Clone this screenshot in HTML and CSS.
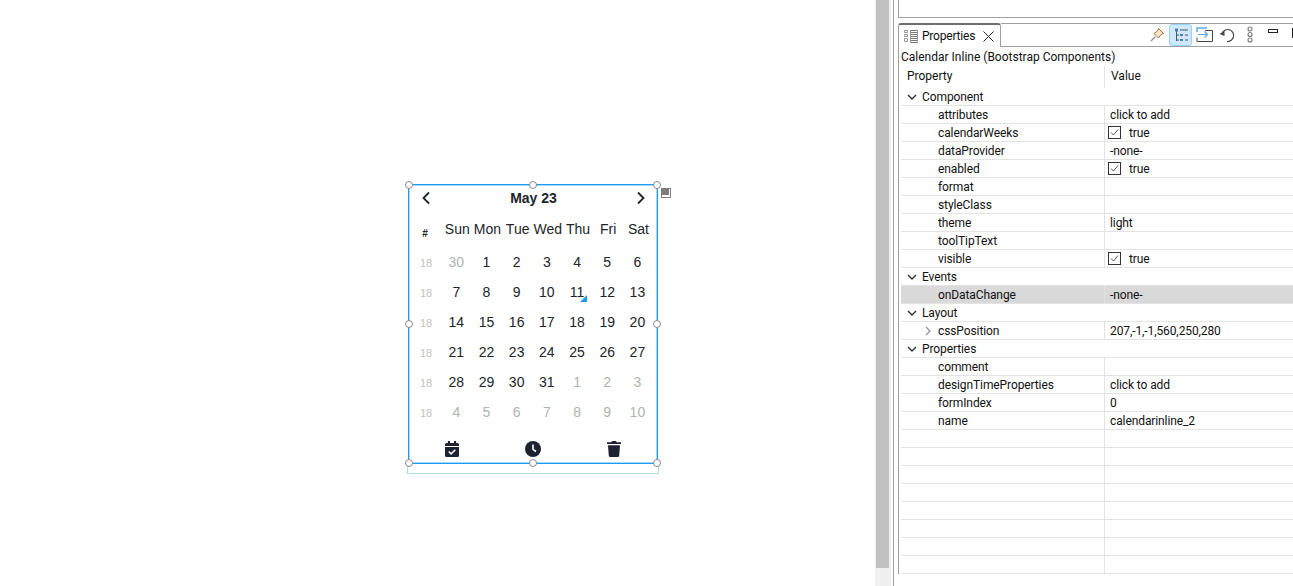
FILE: index.html
```html
<!DOCTYPE html>
<html lang="en">

<head>
    <meta charset="UTF-8">
    <title>Calendar Inline</title>
    <link rel="stylesheet" href="styles.css">
</head>

<body>
    <div class="canvas">
        <div class="ghost"></div>
        <div class="calendar">
            <div class="cal-head">
                <svg class="nav" viewBox="0 0 10 14"><path d="M8 1.500 2.500 7 8 12.500" /></svg>
                <span class="cal-title">May 23</span>
                <svg class="nav" viewBox="0 0 10 14"><path d="M2 1.500 7.500 7 2 12.500" /></svg>
            </div>
            <div class="cal-grid cal-weekdays">
                <span class="hash">#</span>
                <span>Sun</span><span>Mon</span><span>Tue</span><span>Wed</span><span>Thu</span><span>Fri</span><span>Sat</span>
            </div>
            <div class="cal-grid">
                <span class="wk">18</span><span class="muted">30</span><span>1</span><span>2</span><span>3</span><span>4</span><span>5</span><span>6</span>
                <span class="wk">18</span><span>7</span><span>8</span><span>9</span><span>10</span><span class="today">11</span><span>12</span><span>13</span>
                <span class="wk">18</span><span>14</span><span>15</span><span>16</span><span>17</span><span>18</span><span>19</span><span>20</span>
                <span class="wk">18</span><span>21</span><span>22</span><span>23</span><span>24</span><span>25</span><span>26</span><span>27</span>
                <span class="wk">18</span><span>28</span><span>29</span><span>30</span><span>31</span><span class="muted">1</span><span class="muted">2</span><span class="muted">3</span>
                <span class="wk">18</span><span class="muted">4</span><span class="muted">5</span><span class="muted">6</span><span class="muted">7</span><span class="muted">8</span><span class="muted">9</span><span class="muted">10</span>
            </div>
            <div class="cal-foot">
                <svg class="foot-icon" viewBox="0 0 14 16">
                    <path d="M3 0h2v2h4V0h2v2h1.500A1.500 1.500 0 0 1 14 3.500V5H0V3.500A1.500 1.500 0 0 1 1.500 2H3zM0 6h14v8.500a1.500 1.500 0 0 1-1.500 1.500h-11A1.500 1.500 0 0 1 0 14.500z" />
                    <path class="tick" d="M3.800 10.500 6.100 12.800 10.300 8.700" />
                </svg>
                <svg class="foot-icon" viewBox="0 0 16 16">
                    <circle cx="8" cy="8" r="8" />
                    <path class="tick" d="M8 3.500V8.300L11 10.500" />
                </svg>
                <svg class="foot-icon" viewBox="0 0 14 16">
                    <path d="M5 0h4l.7 1.200H14v1.800H0V1.200h4.300zM1 4.200h12l-.8 10.500A1.400 1.400 0 0 1 10.800 16H3.200a1.400 1.400 0 0 1-1.400-1.300z" />
                </svg>
            </div>
        </div>
        <span class="handle h-tl"></span><span class="handle h-tc"></span><span class="handle h-tr"></span>
        <span class="handle h-ml"></span><span class="handle h-mr"></span>
        <span class="handle h-bl"></span><span class="handle h-bc"></span><span class="handle h-br"></span>
        <svg class="corner" viewBox="0 0 10 10">
            <rect x="0" y="0" width="10" height="10" fill="#7d7d7d" />
            <rect x="8" y="1" width="1" height="7" fill="#fff" />
            <rect x="1" y="7" width="8" height="2" fill="#fff" />
        </svg>
    </div>

    <div class="scrollbar"><div class="thumb"></div></div>

    <div class="views">
        <div class="upper-view"></div>
        <div class="tab-bar">
            <div class="tab">
                <svg class="tab-icon" viewBox="0 0 14 14">
                    <path d="M.5 1.500h3v2h-3zM.5 5.500h3v2h-3zM.5 9.500h3v3h-3z" stroke="#9a9a9a" />
                    <path d="M6 1.500h8M6 3.500h8M6 5.500h8M6 7.500h8M6 9.500h8M6 11.500h8M6 13.500h8" stroke="#777" />
                    <path d="M6.500 1v13M13.500 1v13" stroke="#999" />
                </svg>
                <span class="tab-label">Properties</span>
                <svg class="tab-close" viewBox="0 0 11 11"><path d="M.5.500 10.500 10.500M10.500.500.500 10.500" /></svg>
            </div>
            <div class="toolbar">
                <svg class="tool" viewBox="0 0 22 22">
                    <path d="M12.500 4.500 17.500 9.500 15 10.500 12.500 14 8 9.500 11.500 7z" fill="#fbe9c8" stroke="#b5703a" />
                    <path d="M9.500 12.500 5 17" stroke="#8f8f8f" stroke-width="1.200" fill="none" />
                </svg>
                <span class="tool-on">
                    <svg class="tool" viewBox="0 0 22 22">
                        <path d="M6.500 6v11M6.500 11H9M6.500 16H9" stroke="#555" fill="none" />
                        <path d="M5 4.500h3v3H5zM10 10h3v2h-3zM10 15h3v2h-3z" fill="#4a7fb0" />
                        <path d="M10 6h8M15 11h3M15 16h3" stroke="#555" fill="none" />
                    </svg>
                </span>
                <svg class="tool" viewBox="0 0 22 22">
                    <path d="M12 6.500h7.500v11H4v-4" fill="none" stroke="#444" />
                    <path d="M4 8V4h10" fill="none" stroke="#5aa9e6" stroke-width="1.500" />
                    <path d="M5 10.500h9M11.500 7.500 14.500 10.500 11.500 13.500" fill="none" stroke="#5aa9e6" stroke-width="1.200" />
                </svg>
                <svg class="tool" viewBox="0 0 22 22">
                    <path d="M6 9.500A6 6 0 1 1 11 17.500" fill="none" stroke="#444" stroke-width="1.200" />
                    <path d="M3.500 10 8.500 7v5z" fill="#444" />
                </svg>
                <svg class="tool" viewBox="0 0 22 22">
                    <circle cx="11" cy="5" r="2" fill="none" stroke="#7c7c7c" stroke-width="1.200" />
                    <circle cx="11" cy="10.500" r="2" fill="none" stroke="#7c7c7c" stroke-width="1.200" />
                    <circle cx="11" cy="16" r="2" fill="none" stroke="#7c7c7c" stroke-width="1.200" />
                </svg>
                <span class="win-min"></span>
                <span class="win-max"></span>
            </div>
        </div>
        <div class="sheet">
            <div class="sheet-title">Calendar Inline (Bootstrap Components)</div>
            <div class="sheet-head"><span class="col-name">Property</span><span class="col-value">Value</span></div>

            <div class="row"><span class="name group"><svg class="twist" viewBox="0 0 10 10"><path d="M1 3 5 7 9 3" /></svg>Component</span><span class="val"></span></div>
            <div class="row"><span class="name">attributes</span><span class="val">click to add</span></div>
            <div class="row"><span class="name">calendarWeeks</span><span class="val"><svg class="check" viewBox="0 0 13 13"><rect x=".5" y=".5" width="12" height="12" /><path d="M3 6.500 5.500 9 10 3.500" /></svg>true</span></div>
            <div class="row"><span class="name">dataProvider</span><span class="val">-none-</span></div>
            <div class="row"><span class="name">enabled</span><span class="val"><svg class="check" viewBox="0 0 13 13"><rect x=".5" y=".5" width="12" height="12" /><path d="M3 6.500 5.500 9 10 3.500" /></svg>true</span></div>
            <div class="row"><span class="name">format</span><span class="val"></span></div>
            <div class="row"><span class="name">styleClass</span><span class="val"></span></div>
            <div class="row"><span class="name">theme</span><span class="val">light</span></div>
            <div class="row"><span class="name">toolTipText</span><span class="val"></span></div>
            <div class="row"><span class="name">visible</span><span class="val"><svg class="check" viewBox="0 0 13 13"><rect x=".5" y=".5" width="12" height="12" /><path d="M3 6.500 5.500 9 10 3.500" /></svg>true</span></div>
            <div class="row"><span class="name group"><svg class="twist" viewBox="0 0 10 10"><path d="M1 3 5 7 9 3" /></svg>Events</span><span class="val"></span></div>
            <div class="row selected"><span class="name">onDataChange</span><span class="val">-none-</span></div>
            <div class="row"><span class="name group"><svg class="twist" viewBox="0 0 10 10"><path d="M1 3 5 7 9 3" /></svg>Layout</span><span class="val"></span></div>
            <div class="row"><span class="name sub"><svg class="twist closed" viewBox="0 0 10 10"><path d="M3 1 7 5 3 9" /></svg>cssPosition</span><span class="val">207,-1,-1,560,250,280</span></div>
            <div class="row"><span class="name group"><svg class="twist" viewBox="0 0 10 10"><path d="M1 3 5 7 9 3" /></svg>Properties</span><span class="val"></span></div>
            <div class="row"><span class="name">comment</span><span class="val"></span></div>
            <div class="row"><span class="name">designTimeProperties</span><span class="val">click to add</span></div>
            <div class="row"><span class="name">formIndex</span><span class="val">0</span></div>
            <div class="row"><span class="name">name</span><span class="val">calendarinline_2</span></div>
            <div class="row"><span class="name"></span><span class="val"></span></div>
            <div class="row"><span class="name"></span><span class="val"></span></div>
            <div class="row"><span class="name"></span><span class="val"></span></div>
            <div class="row"><span class="name"></span><span class="val"></span></div>
            <div class="row"><span class="name"></span><span class="val"></span></div>
            <div class="row"><span class="name"></span><span class="val"></span></div>
            <div class="row"><span class="name"></span><span class="val"></span></div>
            <div class="row"><span class="name"></span><span class="val"></span></div>
        </div>
    </div>
</body>

</html>
```

FILE: styles.css
```css
html, body {
    height: 100%;
}

body {
    margin: 0;
    display: flex;
    overflow: hidden;
    background: #fff;
    font-family: Roboto, "Open Sans", sans-serif;
    font-size: 12px;
    color: #111;
}

/* form editor */
.canvas {
    position: relative;
    width: 875px;
    flex: none;
}

.calendar {
    position: absolute;
    left: 408px;
    top: 184px;
    width: 250px;
    height: 280px;
    box-sizing: border-box;
    border: 1px solid #1a9cf5;
    box-shadow: inset 0 0 0 1px #a5d8fb;
    padding-left: 2px;
    font-family: "Liberation Sans", Arial, sans-serif;
    font-size: 14px;
    color: #212529;
}

.ghost {
    position: absolute;
    left: 407px;
    top: 464px;
    width: 250px;
    height: 9px;
    border: 1px solid #b5d9ec;
    border-top: none;
}

.cal-head {
    display: flex;
    align-items: center;
    justify-content: space-between;
    height: 26px;
    padding: 0 11px 0 10px;
}

.cal-title {
    font-weight: bold;
}

.nav {
    width: 10px;
    height: 14px;
    fill: none;
    stroke: #212529;
    stroke-width: 1.800;
}

.cal-grid {
    display: grid;
    grid-template-columns: repeat(8, 30.200px);
    grid-auto-rows: 30px;
    align-items: center;
    justify-items: center;
}

.cal-grid span {
    position: relative;
}

.cal-weekdays {
    height: 33px;
    margin-top: 3px;
}

.cal-weekdays span {
    left: 1px;
}

.cal-weekdays .hash {
    left: -1px;
    top: 4px;
    font-size: 10px;
    font-weight: bold;
}

.wk {
    top: 1px;
    font-size: 11px;
    color: #c4c4bc;
}

.muted {
    color: #adb5b0;
}

.today::after {
    content: "";
    position: absolute;
    right: -3px;
    bottom: -2px;
    border-style: solid;
    border-width: 0 0 7px 7px;
    border-color: transparent transparent #1a9cf5 transparent;
}

.cal-foot {
    display: flex;
    justify-content: space-between;
    align-items: center;
    height: 23px;
    margin-top: 10px;
    padding: 0 35px 0 33px;
}

.foot-icon {
    height: 16px;
    width: 16px;
    fill: #1c2230;
}

.foot-icon .tick {
    fill: none;
    stroke: #fff;
    stroke-width: 1.600;
}

.handle {
    position: absolute;
    width: 6px;
    height: 6px;
    margin: -4px 0 0 -4px;
    border: 1px solid #8a8a8a;
    border-radius: 50%;
    background: #fff;
}

.h-tl { left: 409px; top: 185px; }
.h-tc { left: 533px; top: 185px; }
.h-tr { left: 657px; top: 185px; }
.h-ml { left: 409px; top: 324px; }
.h-mr { left: 657px; top: 324px; }
.h-bl { left: 409px; top: 463px; }
.h-bc { left: 533px; top: 463px; }
.h-br { left: 657px; top: 463px; }

.corner {
    position: absolute;
    left: 661px;
    top: 188px;
    width: 10px;
    height: 10px;
}

/* scrollbar between editor and views */
.scrollbar {
    width: 16px;
    flex: none;
    background: #f0f0f0;
}

.thumb {
    width: 13px;
    height: 568px;
    margin-left: 1px;
    background: #c1c1c1;
}

/* properties view */
.views {
    flex: 1;
    min-width: 0;
    margin-left: 2px;
    padding-left: 5px;
    border-left: 1px solid #a0a0a0;
}

.upper-view {
    height: 18px;
    box-sizing: border-box;
    border-left: 1px solid #a0a0a0;
    border-bottom: 1px solid #a0a0a0;
    margin-left: -1px;
}

.tab-bar {
    display: flex;
    height: 24px;
    margin-top: 5px;
}

.tab {
    display: flex;
    align-items: center;
    width: 103px;
    flex: none;
    box-sizing: border-box;
    margin-left: -1px;
    padding-left: 5px;
    border-top: 2px solid #6e6e6e;
    border-left: 1px solid #a0a0a0;
    border-right: 1px solid #a0a0a0;
    border-top-left-radius: 3px;
    border-top-right-radius: 3px;
}

.tab-icon {
    width: 14px;
    height: 14px;
    margin-right: 4px;
    fill: none;
}

.tab-label {
    letter-spacing: -.2px;
}

.tab-close {
    width: 11px;
    height: 11px;
    margin-left: 8px;
    fill: none;
    stroke: #222;
}

.toolbar {
    flex: 1;
    display: flex;
    align-items: center;
    gap: 1px;
    padding-left: 145px;
    overflow: hidden;
    border-top: 1px solid #a0a0a0;
    border-bottom: 1px solid #a0a0a0;
}

.tool {
    width: 22px;
    height: 22px;
    flex: none;
}

.tool-on {
    display: flex;
    box-sizing: border-box;
    width: 23px;
    height: 22px;
    flex: none;
    align-items: center;
    justify-content: center;
    border: 1px solid #99d1ff;
    border-radius: 3px;
    background: #cde8ff;
}

.win-min {
    width: 10px;
    height: 4px;
    flex: none;
    margin: -8px 13px 0 6px;
    border: 1px solid #222;
    box-sizing: border-box;
}

.win-max {
    width: 10px;
    height: 10px;
    flex: none;
    margin: -4px 0 0 0;
    border: 1px solid #222;
    box-sizing: border-box;
}

.sheet {
    border-left: 1px solid #a0a0a0;
    margin-left: -1px;
    padding-left: 2px;
}

.sheet-title {
    height: 19px;
    line-height: 21px;
}

.sheet-head {
    display: flex;
    height: 22px;
    line-height: 21px;
}

.col-name {
    width: 204px;
    flex: none;
    padding-left: 6px;
    box-sizing: border-box;
    border-right: 1px solid #e3e3e3;
}

.col-value {
    padding-left: 6px;
}

.row {
    display: flex;
    height: 18px;
    box-sizing: border-box;
    line-height: 19px;
    letter-spacing: -.1px;
    border-bottom: 1px solid #e3e3e3;
}

.row.selected {
    background: #d9d9d9;
}

.name {
    display: flex;
    align-items: flex-start;
    width: 204px;
    flex: none;
    box-sizing: border-box;
    padding-left: 37px;
    border-right: 1px solid #e3e3e3;
}

.name.group {
    padding-left: 6px;
    border-right-color: transparent;
}

.name.sub {
    padding-left: 22px;
}

.val {
    display: flex;
    align-items: flex-start;
    padding-left: 5px;
}

.twist {
    align-self: center;
    width: 10px;
    height: 10px;
    margin-right: 5px;
    fill: none;
    stroke: #333;
    stroke-width: 1.400;
}

.twist.closed {
    stroke: #999;
}

.check {
    align-self: center;
    width: 13px;
    height: 13px;
    margin: 0 8px 0 -2px;
    fill: #fff;
    stroke: #333;
}

.check path {
    fill: none;
    stroke: #555;
}
```
